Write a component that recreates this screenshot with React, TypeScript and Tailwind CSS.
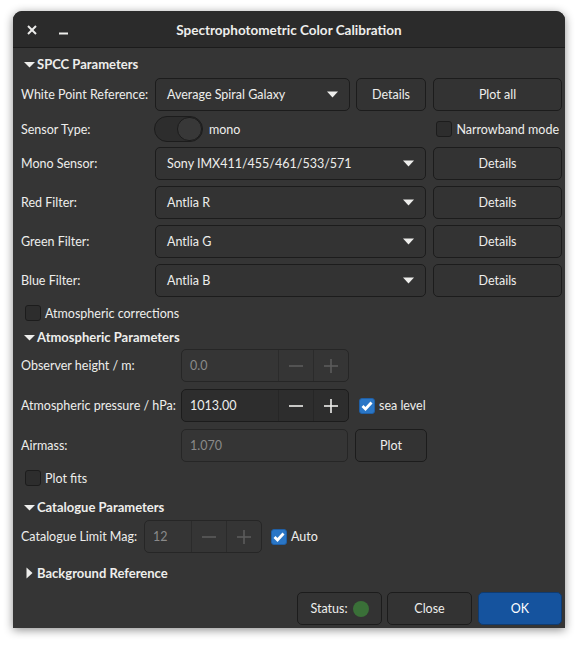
import React from "react";

const Down = ({ cls = "" }: { cls?: string }) => (
  <svg width="11" height="7" viewBox="0 0 11 7" className={cls}>
    <polygon points="0,0.5 11,0.5 5.5,6.5" fill="#eeeeec" />
  </svg>
);

const SectionHeader = ({ text, open = true, mt }: { text: string; open?: boolean; mt: string }) => (
  <div className={`flex items-center h-[20px] ${mt} pl-[3px]`}>
    {open ? (
      <svg width="11" height="7" viewBox="0 0 11 7" className="mr-[2px]">
        <polygon points="0,1 11,1 5.5,6.5" fill="#eeeeec" />
      </svg>
    ) : (
      <svg width="7" height="12" viewBox="0 0 7 12" className="ml-[2px] mr-[4px]">
        <polygon points="0.5,0.5 6.5,6 0.5,11.5" fill="#eeeeec" />
      </svg>
    )}
    <span className="font-bold text-[13px] text-[#eeeeec] whitespace-nowrap pt-[1px]">{text}</span>
  </div>
);

const Button = ({
  text,
  w,
  cls = "",
  bg = "bg-[#333333] border-[#1c1c1c] text-[#eeeeec]",
}: {
  text: React.ReactNode;
  w: string;
  cls?: string;
  bg?: string;
}) => (
  <div
    className={`${w} h-[33px] shrink-0 flex items-center justify-center rounded-[5px] border ${bg} text-[12.5px] whitespace-nowrap pt-[2px] ${cls}`}
  >
    {text}
  </div>
);

const Combo = ({ text, w }: { text: string; w: string }) => (
  <div
    className={`${w} h-[33px] shrink-0 flex items-center justify-between pl-[11px] pr-[11px] rounded-[5px] border border-[#1c1c1c] bg-[#333333] text-[12.5px] text-[#eeeeec] whitespace-nowrap`}
  >
    <span className="pt-[2px]">{text}</span>
    <Down />
  </div>
);

const Label = ({ text, w }: { text: string; w: string }) => (
  <div className={`${w} shrink-0 text-[12.5px] text-[#eeeeec] whitespace-nowrap pt-[2px]`}>{text}</div>
);

const Check = ({ checked = false }: { checked?: boolean }) =>
  checked ? (
    <div className="w-[16px] h-[16px] shrink-0 rounded-[3px] bg-[#2a76c6] border border-[#1f5fa6] flex items-center justify-center">
      <svg width="12" height="10" viewBox="0 0 12 10">
        <polyline points="1.5,5 4.5,8 10.5,1.5" fill="none" stroke="#ffffff" strokeWidth="2.8" />
      </svg>
    </div>
  ) : (
    <div className="w-[16px] h-[16px] shrink-0 rounded-[3px] bg-[#2d2d2d] border border-[#1c1c1c]" />
  );

const Minus = ({ c }: { c: string }) => (
  <svg width="16" height="16" viewBox="0 0 16 16">
    <line x1="1" y1="8" x2="15" y2="8" stroke={c} strokeWidth="1.6" />
  </svg>
);
const Plus = ({ c }: { c: string }) => (
  <svg width="16" height="16" viewBox="0 0 16 16">
    <line x1="1" y1="8" x2="15" y2="8" stroke={c} strokeWidth="1.6" />
    <line x1="8" y1="1" x2="8" y2="15" stroke={c} strokeWidth="1.6" />
  </svg>
);

const Spin = ({
  value,
  inputW,
  disabled = false,
}: {
  value: string;
  inputW: string;
  disabled?: boolean;
}) => {
  const c = disabled ? "#5c5c5c" : "#eeeeec";
  const div = disabled ? "border-[#2b2b2b]" : "border-[#262626]";
  return (
    <div
      className={`h-[33px] shrink-0 flex rounded-[5px] border ${
        disabled ? "border-[#262626] bg-[#353535]" : "border-[#1c1c1c] bg-[#2d2d2d]"
      }`}
    >
      <div
        className={`${inputW} flex items-center pl-[8px] pt-[2px] text-[12.5px] ${
          disabled ? "text-[#8a8a8a]" : "text-[#eeeeec]"
        }`}
      >
        {value}
      </div>
      <div className={`w-[35px] flex items-center justify-center border-l ${div}`}>
        <Minus c={c} />
      </div>
      <div className={`w-[35px] flex items-center justify-center border-l ${div}`}>
        <Plus c={c} />
      </div>
    </div>
  );
};

export default function App() {
  return (
    <div className="w-[579px] h-[645px] bg-white font-['Lato',sans-serif] pt-[11px] pl-[13px]">
      <div className="w-[552px] h-[617px] flex flex-col rounded-t-[9px] bg-[#353535] shadow-[0_2px_10px_rgba(0,0,0,0.45)] overflow-hidden">
        {/* title bar */}
        <div className="h-[37px] shrink-0 flex items-center bg-[#2b2b2b] border-b border-[#1b1b1b]">
          <svg width="10" height="10" viewBox="0 0 10 10" className="ml-[14px] mt-[1px]">
            <line x1="1" y1="1" x2="9" y2="9" stroke="#eeeeec" strokeWidth="2" />
            <line x1="9" y1="1" x2="1" y2="9" stroke="#eeeeec" strokeWidth="2" />
          </svg>
          <svg width="9" height="10" viewBox="0 0 9 10" className="ml-[22px] mt-[1px]">
            <line x1="0" y1="8.5" x2="9" y2="8.5" stroke="#eeeeec" strokeWidth="2" />
          </svg>
          <div className="flex-1 text-center font-bold text-[13.5px] text-[#eeeeec] mr-[55px] mt-[2px]">
            Spectrophotometric Color Calibration
          </div>
        </div>

        {/* body */}
        <div className="flex-1 flex flex-col pl-[8px] pr-[3px] pb-[3px]">
          <SectionHeader text="SPCC Parameters" mt="mt-[6px]" />

          <div className="flex items-center mt-[4px]">
            <Label text="White Point Reference:" w="w-[134px]" />
            <Combo text="Average Spiral Galaxy" w="w-[195px]" />
            <Button text="Details" w="w-[70px]" cls="ml-[6px]" />
            <Button text="Plot all" w="w-[129px]" cls="ml-[7px]" />
          </div>

          <div className="flex items-center mt-[5px] h-[26px]">
            <Label text="Sensor Type:" w="w-[133px]" />
            <div className="w-[49px] h-[26px] shrink-0 rounded-full bg-[#2d2d2d] border border-[#1c1c1c] flex justify-end">
              <div className="w-[25px] h-[24px] rounded-full bg-[#383838] border border-[#1c1c1c]" />
            </div>
            <span className="ml-[6px] pt-[2px] text-[12.5px] text-[#eeeeec]">mono</span>
            <div className="flex-1" />
            <Check />
            <span className="ml-[4px] mr-[3px] pt-[2px] text-[12.5px] text-[#eeeeec] whitespace-nowrap">Narrowband mode</span>
          </div>

          {[
            ["Mono Sensor:", "Sony IMX411/455/461/533/571", "mt-[5px]"],
            ["Red Filter:", "Antlia R", "mt-[6px]"],
            ["Green Filter:", "Antlia G", "mt-[6px]"],
            ["Blue Filter:", "Antlia B", "mt-[6px]"],
          ].map(([l, v, mt]) => (
            <div key={l} className={`flex items-center ${mt}`}>
              <Label text={l} w="w-[134px]" />
              <Combo text={v} w="w-[271px]" />
              <Button text="Details" w="w-[129px]" cls="ml-[7px]" />
            </div>
          ))}

          <div className="flex items-center mt-[8px] h-[16px] pl-[4px]">
            <Check />
            <span className="ml-[4px] pt-[2px] text-[12.5px] text-[#eeeeec]">Atmospheric corrections</span>
          </div>

          <SectionHeader text="Atmospheric Parameters" mt="mt-[6px]" />

          <div className="flex items-center mt-[2px]">
            <Label text="Observer height / m:" w="w-[160px]" />
            <Spin value="0.0" inputW="w-[96px]" disabled />
          </div>

          <div className="flex items-center mt-[7px]">
            <Label text="Atmospheric pressure / hPa:" w="w-[160px]" />
            <Spin value="1013.00" inputW="w-[96px]" />
            <div className="ml-[10px]">
              <Check checked />
            </div>
            <span className="ml-[4px] pt-[2px] text-[12.5px] text-[#eeeeec]">sea level</span>
          </div>

          <div className="flex items-center mt-[7px]">
            <Label text="Airmass:" w="w-[160px]" />
            <div className="w-[167px] h-[33px] shrink-0 flex items-center pl-[8px] pt-[2px] rounded-[5px] border border-[#262626] bg-[#353535] text-[12.5px] text-[#8a8a8a]">
              1.070
            </div>
            <Button text="Plot" w="w-[72px]" cls="ml-[7px]" />
          </div>

          <div className="flex items-center mt-[8px] h-[16px] pl-[4px]">
            <Check />
            <span className="ml-[4px] pt-[2px] text-[12.5px] text-[#eeeeec]">Plot fits</span>
          </div>

          <SectionHeader text="Catalogue Parameters" mt="mt-[11px]" />

          <div className="flex items-center mt-[3px]">
            <Label text="Catalogue Limit Mag:" w="w-[123px]" />
            <Spin value="12" inputW="w-[46px]" disabled />
            <div className="ml-[9px]">
              <Check checked />
            </div>
            <span className="ml-[4px] pt-[2px] text-[12.5px] text-[#eeeeec]">Auto</span>
          </div>

          <SectionHeader text="Background Reference" open={false} mt="mt-[10px]" />

          <div className="flex-1" />

          <div className="flex justify-end">
            <Button
              w="w-[85px]"
              text={
                <span className="flex items-center">
                  Status:
                  <span className="ml-[5px] mb-[2px] w-[16px] h-[16px] rounded-full bg-[#3a7038] inline-block" />
                </span>
              }
            />
            <Button text="Close" w="w-[85px]" cls="ml-[5px]" />
            <Button text="OK" w="w-[84px]" cls="ml-[6px]" bg="bg-[#15539e] border-[#0f3b71] text-white" />
          </div>
        </div>
      </div>
    </div>
  );
}
